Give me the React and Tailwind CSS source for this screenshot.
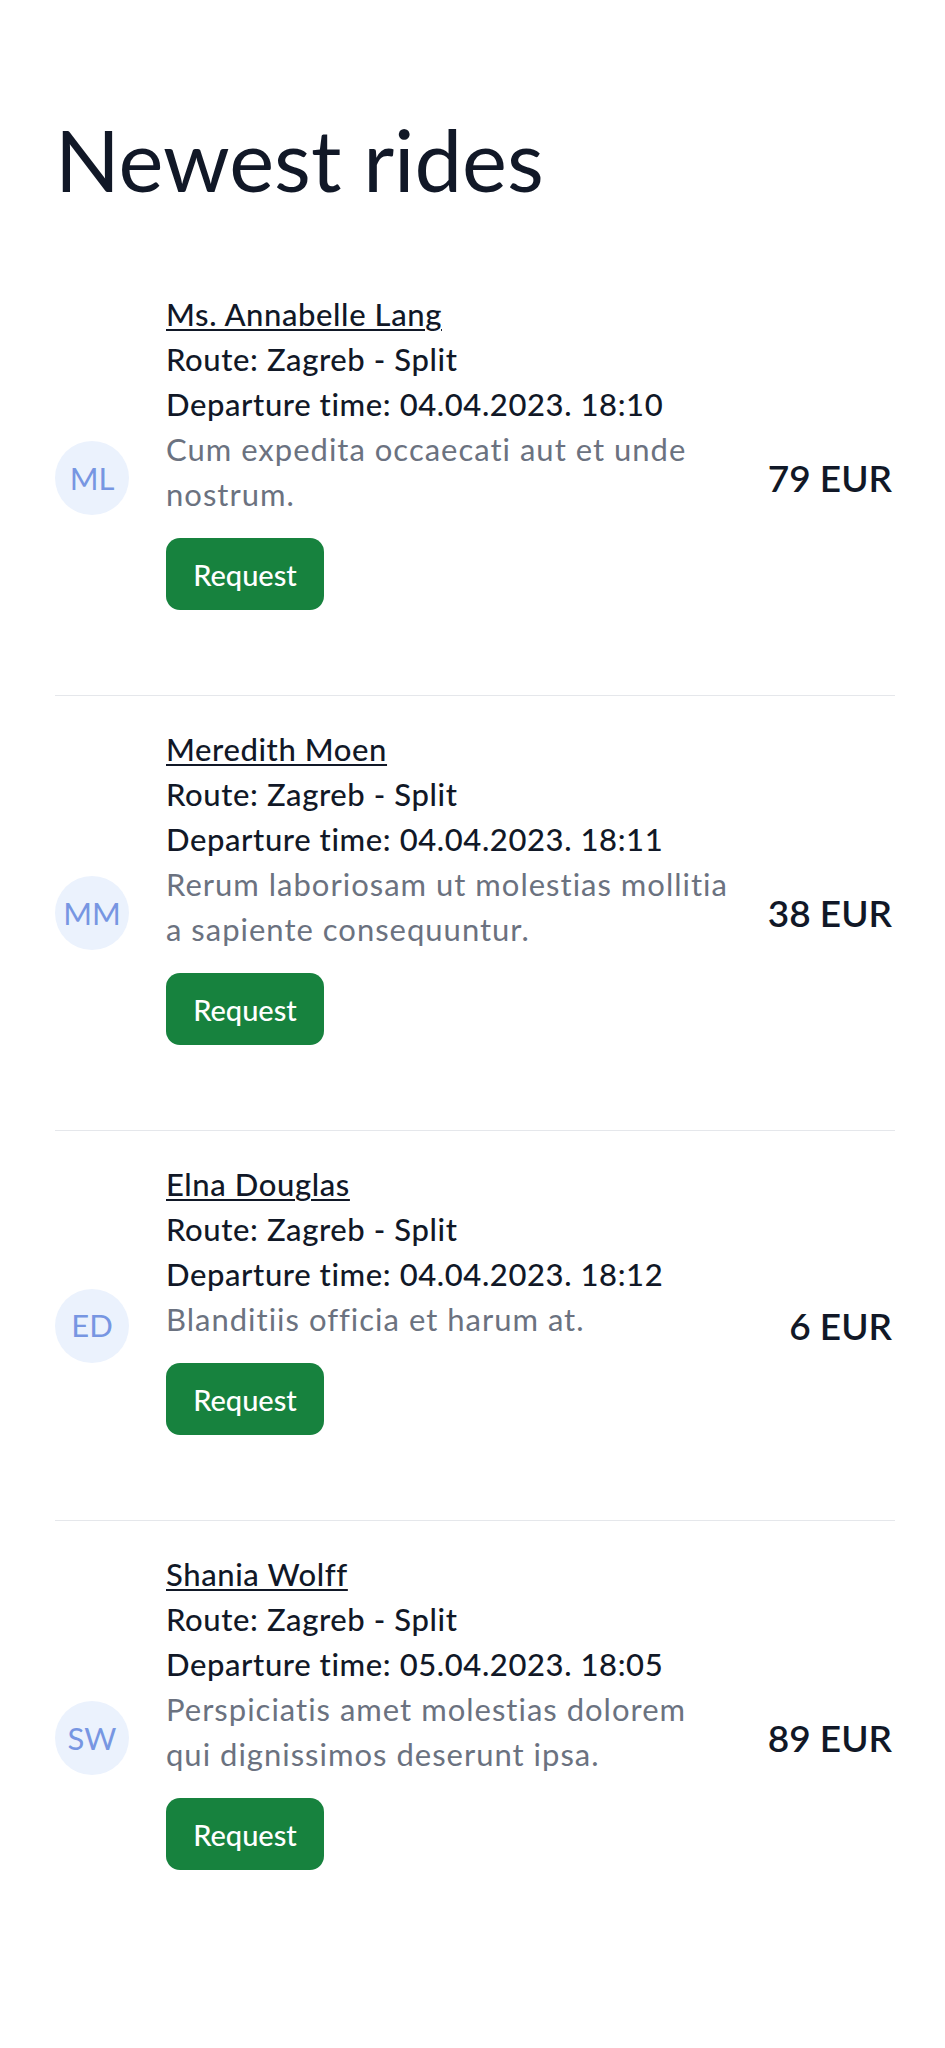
import React from "react";

const rides = [
  {
    initials: "ML",
    name: "Ms. Annabelle Lang",
    route: "Zagreb - Split",
    time: "04.04.2023. 18:10",
    desc: ["Cum expedita occaecati aut et unde", "nostrum."],
    price: "79 EUR",
  },
  {
    initials: "MM",
    name: "Meredith Moen",
    route: "Zagreb - Split",
    time: "04.04.2023. 18:11",
    desc: ["Rerum laboriosam ut molestias mollitia", "a sapiente consequuntur."],
    price: "38 EUR",
  },
  {
    initials: "ED",
    name: "Elna Douglas",
    route: "Zagreb - Split",
    time: "04.04.2023. 18:12",
    desc: ["Blanditiis officia et harum at."],
    price: "6 EUR",
  },
  {
    initials: "SW",
    name: "Shania Wolff",
    route: "Zagreb - Split",
    time: "05.04.2023. 18:05",
    desc: ["Perspiciatis amet molestias dolorem", "qui dignissimos deserunt ipsa."],
    price: "89 EUR",
  },
];

function Ride({ ride, last }) {
  return (
    <div
      className={
        "flex items-center py-[31px] " +
        (last ? "" : "border-b border-[#e5e7eb]")
      }
    >
      <div className="flex h-[74px] w-[74px] shrink-0 items-center justify-center rounded-full bg-[#ebf2fd] text-[31px] text-[#7796e2]">
        {ride.initials}
      </div>
      <div className="ml-[37px] flex w-[575px] shrink-0 flex-col pb-[54px] text-[31px] leading-[45px] tracking-[0.6px]">
        <a
          href="#"
          className="self-start font-medium text-[#111827] underline decoration-[2px] underline-offset-[3px]"
        >
          {ride.name}
        </a>
        <div className="font-medium text-[#111827]">Route: {ride.route}</div>
        <div className="font-medium text-[#111827]">
          Departure time: {ride.time}
        </div>
        <p className="tracking-[1px] text-[#6b7280]">
          {ride.desc.map((line) => (
            <span key={line} className="block whitespace-nowrap">
              {line}
            </span>
          ))}
        </p>
        <button className="mt-[21px] flex h-[72px] w-[158px] items-center justify-center rounded-[14px] bg-[#17823e] text-[29px] font-medium tracking-normal text-white">
          Request
        </button>
      </div>
      <div className="ml-auto mr-[3px] text-[37px] font-semibold text-[#111827]">
        {ride.price}
      </div>
    </div>
  );
}

export default function App() {
  return (
    <div
      className="min-h-[2048px] w-full bg-white px-[55px] pt-[117px]"
      style={{ fontFamily: "Lato, 'Open Sans', sans-serif" }}
    >
      <div className="w-[840px]">
        <h1 className="text-[85px] leading-[84px] font-normal text-[#111827]">
          Newest rides
        </h1>
        <div className="mt-[60px]">
          {rides.map((r, i) => (
            <Ride key={r.name} ride={r} last={i === rides.length - 1} />
          ))}
        </div>
      </div>
    </div>
  );
}
